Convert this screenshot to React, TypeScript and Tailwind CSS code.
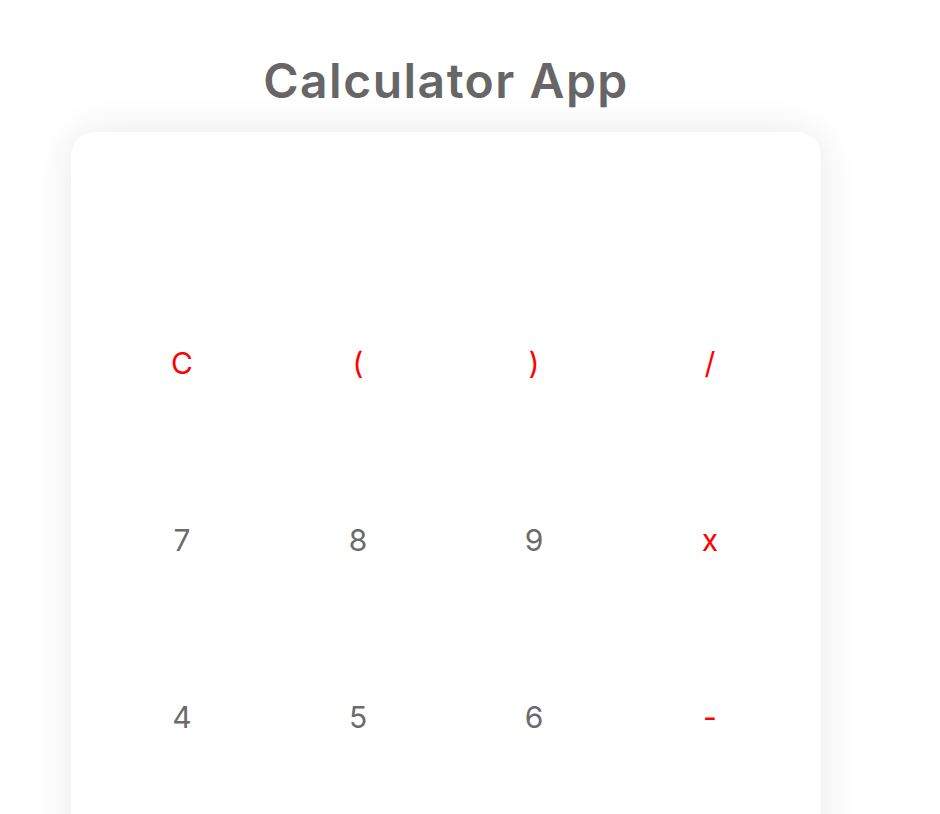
import React from 'react';

const keys: { label: string; op?: boolean }[] = [
  { label: 'C', op: true },
  { label: '(', op: true },
  { label: ')', op: true },
  { label: '/', op: true },
  { label: '7' },
  { label: '8' },
  { label: '9' },
  { label: 'x', op: true },
  { label: '4' },
  { label: '5' },
  { label: '6' },
  { label: '-', op: true },
  { label: '1' },
  { label: '2' },
  { label: '3' },
  { label: '+', op: true },
  { label: '0' },
  { label: '.' },
  { label: '⌫', op: true },
  { label: '=', op: true },
];

const App: React.FC = () => {
  return (
    <div
      className="min-h-screen bg-white flex flex-col items-center pr-[48px]"
      style={{ fontFamily: 'Inter, "Open Sans", sans-serif' }}
    >
      <h1 className="mt-[52px] mb-[22px] text-[48px] leading-[58px] font-semibold text-[#666666] tracking-[1.5px]">
        Calculator App
      </h1>
      <div className="w-[750px] bg-white rounded-[24px] shadow-[0_0_40px_rgba(0,0,0,0.09)]">
        {/* display */}
        <div className="h-[143px] px-[23px]" />
        <div className="grid grid-cols-4 px-[23px] pb-6">
          {keys.map((k) => (
            <button
              key={k.label}
              className={`h-[177px] flex items-center justify-center text-[30px] ${
                k.op ? 'text-[#ff0000]' : 'text-[#6b6b6b]'
              }`}
            >
              {k.label}
            </button>
          ))}
        </div>
      </div>
    </div>
  );
};

export default App;
